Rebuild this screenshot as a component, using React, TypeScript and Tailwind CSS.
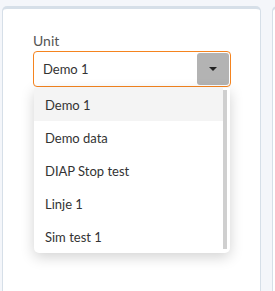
import React from 'react';

const units = ['Demo 1', 'Demo data', 'DIAP Stop test', 'Linje 1', 'Sim test 1'];

const font = { fontFamily: 'Lato, "Noto Sans", sans-serif' };

const UnitSelect: React.FC = () => {
  return (
    <div className="relative w-[198px]">
      <label className="block text-[14px] leading-[16px] text-[#555]">Unit</label>
      <div className="mt-[2px] flex h-[36px] items-center rounded-[4px] border border-[#f5841f] bg-white pl-[9px] pr-[1px]">
        <span className="flex-1 pt-[1px] text-[13px] text-[#333]">Demo 1</span>
        <div className="flex h-[32px] w-[32px] items-center justify-center rounded-[3px] bg-[#b3b3b3]">
          <span className="h-0 w-0 border-x-[4px] border-t-[4px] border-x-transparent border-t-[#222]" />
        </div>
      </div>
      <div className="absolute left-[1px] top-[55px] w-[196px] rounded-b-[5px] bg-white shadow-[0_4px_14px_rgba(0,0,0,0.18)]">
        <div className="flex">
          <ul className="flex-1">
            {units.map((u, i) => (
              <li
                key={u}
                className={`flex h-[33px] items-center pl-[11px] pt-[3px] text-[13px] text-[#333] ${i === 0 ? 'bg-[#f4f4f4]' : ''}`}
              >
                {u}
              </li>
            ))}
          </ul>
          <div className="mr-[3px] mt-[2px] mb-[4px] w-[4px] bg-[#cfcfcf]" />
        </div>
      </div>
    </div>
  );
};

export default function App() {
  return (
    <div className="flex h-[291px] gap-[11px] overflow-hidden bg-[#f4f6fa] pl-[2px] pt-[6px]" style={font}>
      <div className="h-[300px] w-[259px] shrink-0 rounded-t-[5px] border-x border-t-[3px] border-[#d6dfe8] bg-white pl-[30px] pt-[24px]">
        <UnitSelect />
      </div>
      <div className="h-[300px] w-[40px] shrink-0 rounded-t-[5px] border-x border-t-[3px] border-[#d6dfe8] bg-white" />
    </div>
  );
}
